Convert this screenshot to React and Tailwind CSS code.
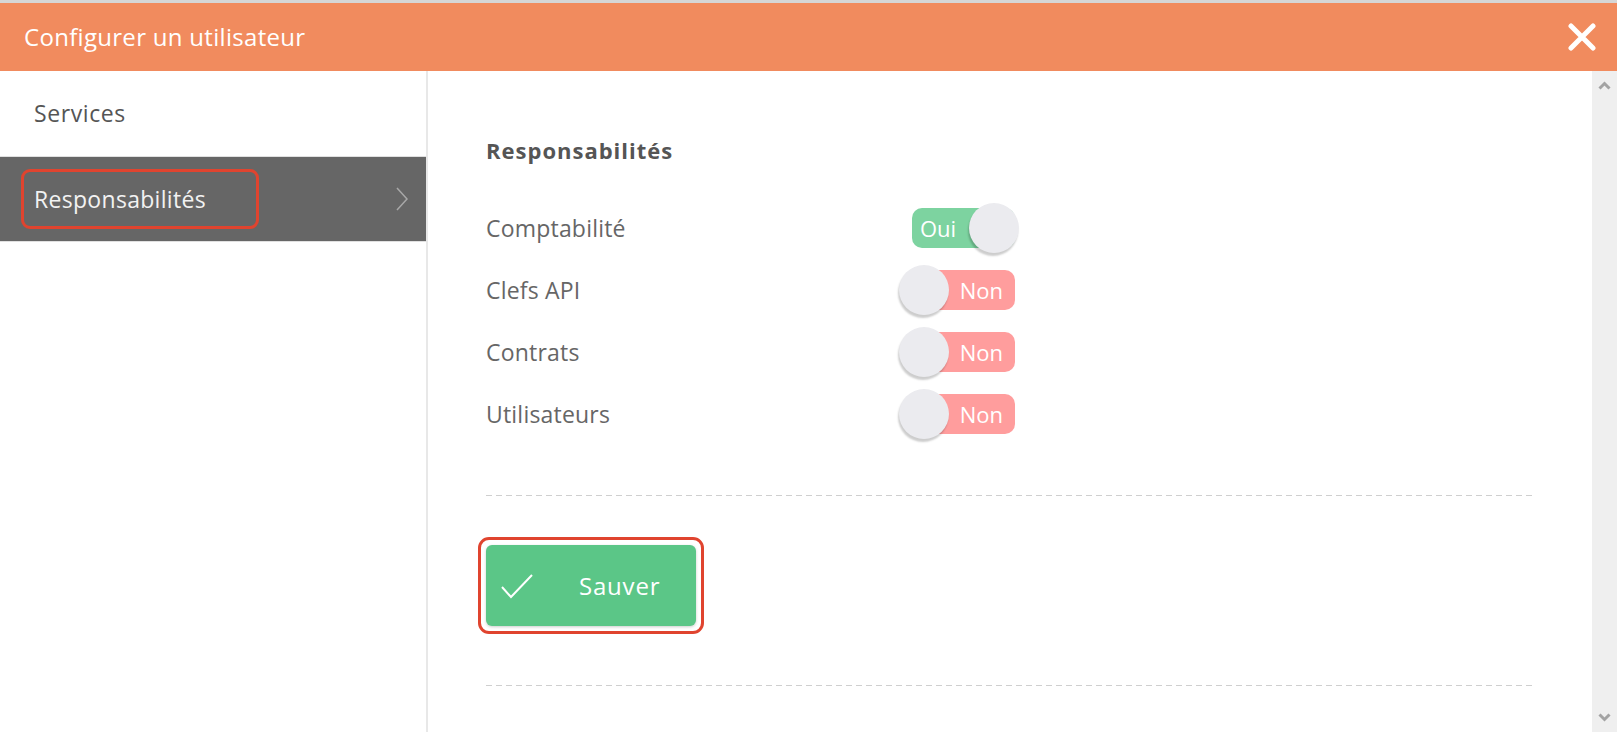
import React, { useState } from "react";

const font = { fontFamily: "'Open Sans', Lato, sans-serif" };

function Toggle({ on }) {
  return (
    <div className="relative w-[120px] h-[50px] shrink-0">
      <div
        className={
          "absolute left-[13px] right-[4px] top-[5px] h-[40px] rounded-[10px] flex items-center text-white text-[22px] " +
          (on ? "bg-[#7dd3a0] justify-start pl-[8px]" : "bg-[#ff9d9d] justify-end pr-[12px]")
        }
      >
        {on ? "Oui" : "Non"}
      </div>
      <div
        className={
          "absolute top-0 w-[50px] h-[50px] rounded-full bg-[#ebebef] shadow-[-1px_3px_2px_rgba(0,0,0,0.2)] " +
          (on ? "right-0" : "left-0")
        }
      />
    </div>
  );
}

function Dashed() {
  return <div className="h-[1px] w-full bg-[repeating-linear-gradient(to_right,#cfcfcf_0_6px,transparent_6px_10px)]" />;
}

export default function App() {
  const [rights] = useState([
    { label: "Comptabilité", on: true },
    { label: "Clefs API", on: false },
    { label: "Contrats", on: false },
    { label: "Utilisateurs", on: false },
  ]);

  return (
    <div className="w-[1617px] h-[732px] bg-white overflow-hidden flex flex-col" style={font}>
      <div className="h-[3px] bg-[#d6d6d6] shrink-0" />
      <div className="h-[68px] bg-[#f18b5e] flex items-center justify-between pl-[24px] pr-[21px] shrink-0">
        <div className="text-white text-[24px] tracking-[0.3px]">Configurer un utilisateur</div>
        <button className="w-[28px] h-[28px]">
          <svg width="28" height="28" viewBox="0 0 28 28">
            <path d="M3 3 L25 25 M25 3 L3 25" stroke="#fff" strokeWidth="5" strokeLinecap="round" />
          </svg>
        </button>
      </div>

      <div className="flex flex-1 min-h-0">
        <div className="w-[428px] shrink-0 border-r-2 border-[#e8e8e8] bg-white">
          <div className="h-[85px] flex items-center pl-[34px] text-[23px] tracking-[0.6px] text-[#555]">Services</div>
          <div className="h-[86px] bg-[#666] border-y border-[#e0e0e0] flex items-center justify-between pl-[21px] pr-[18px]">
            <div className="h-[60px] w-[238px] border-[3px] border-[#e0442f] rounded-[9px] flex items-center pl-[10px] text-[23px] tracking-[0.3px] text-[#f2f2f2]">
              Responsabilités
            </div>
            <svg width="12" height="24" viewBox="0 0 12 24">
              <polyline points="1,1 11,12 1,23" fill="none" stroke="#a8a8a8" strokeWidth="1.5" />
            </svg>
          </div>
        </div>

        <div className="flex-1 pl-[58px] pr-[60px] pt-[64px]">
          <h2 className="text-[22px] leading-[30px] font-bold tracking-[1px] text-[#555]">Responsabilités</h2>
          <div className="mt-[32px]">
            {rights.map((r) => (
              <div key={r.label} className="h-[62px] flex items-center">
                <div className="w-[413px] text-[23px] tracking-[0.2px] text-[#666]">{r.label}</div>
                <Toggle on={r.on} />
              </div>
            ))}
          </div>
          <div className="mt-[50px]">
            <Dashed />
          </div>
          <div className="mt-[41px] -ml-[8px] w-[226px] h-[97px] border-[3px] border-[#e0442f] rounded-[11px] p-[5px]">
            <button className="w-full h-full rounded-[6px] bg-[#5bc687] shadow-[0_1px_3px_rgba(0,0,0,0.2)] flex items-center pl-[15px] text-white text-[24px] tracking-[0.8px]">
              <svg width="32" height="26" viewBox="0 0 32 26">
                <polyline points="1,14 10,24 31,2" fill="none" stroke="#fff" strokeWidth="2" />
              </svg>
              <span className="ml-[46px]">Sauver</span>
            </button>
          </div>
          <div className="mt-[51px]">
            <Dashed />
          </div>
        </div>

        <div className="w-[25px] shrink-0 bg-[#efefef] flex flex-col items-center justify-between py-[10px]">
          <svg width="13" height="9" viewBox="0 0 13 9">
            <polyline points="1.5,7.5 6.5,2.5 11.5,7.5" fill="none" stroke="#a3a3a3" strokeWidth="3" />
          </svg>
          <svg width="13" height="9" viewBox="0 0 13 9">
            <polyline points="1.5,1.5 6.5,6.5 11.5,1.5" fill="none" stroke="#a3a3a3" strokeWidth="3" />
          </svg>
        </div>
      </div>
    </div>
  );
}
